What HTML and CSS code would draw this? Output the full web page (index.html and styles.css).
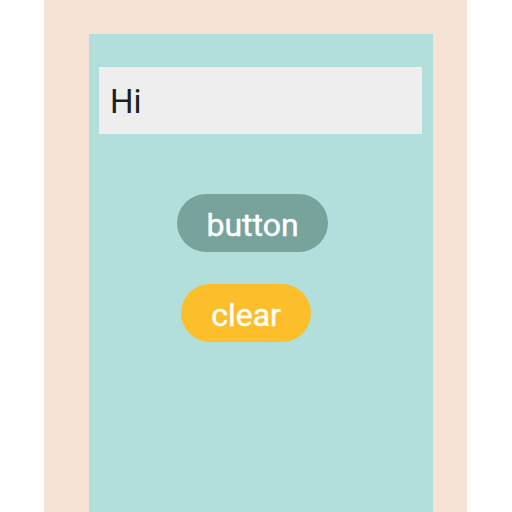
FILE: index.html
```html
<!DOCTYPE html>
<html lang="en">
<head>
    <meta charset="UTF-8" />
    <meta name="viewport" content="width=device-width, initial-scale=1.0" />
    <title>Hi</title>
    <link rel="stylesheet" href="styles.css">
</head>
<body>
    <div class="frame">
        <main class="panel">
            <div class="field">Hi</div>
            <button class="btn btn-main">button</button>
            <button class="btn btn-clear">clear</button>
        </main>
    </div>
</body>
</html>
```

FILE: styles.css
```css
/* Main Styles */
body {
    margin: 0;
    padding: 0;
    background-color: #ffffff;
    font-family: Roboto, 'Noto Sans', sans-serif;
}

.frame {
    margin-left: 44px;
    width: 423px;
    height: 512px;
    box-sizing: border-box;
    padding: 34px 34px 0 45px;
    background-color: #f7e3d6;
}

.panel {
    height: 100%;
    background-color: #b2dfdb;
    display: flex;
    flex-direction: column;
    align-items: flex-start;
    padding-top: 33px;
    box-sizing: border-box;
}

.field {
    margin: 0 11px 0 10px;
    align-self: stretch;
    height: 67px;
    box-sizing: border-box;
    padding-left: 11px;
    padding-top: 2px;
    background-color: #eeeeee;
    color: #1e1e1e;
    font-size: 33px;
    line-height: 65px;
}

/* Buttons */
.btn {
    height: 58px;
    border: none;
    border-radius: 29px;
    color: #ffffff;
    font-family: Roboto, sans-serif;
    font-weight: normal;
    font-size: 32px;
    padding: 3px 0 0;
    cursor: pointer;
    -webkit-text-stroke: 0.4px #ffffff;
}

.btn-main {
    margin: 60px 0 0 88px;
    width: 151px;
    background-color: #78a39c;
}

.btn-clear {
    margin: 32px 0 0 92px;
    width: 130px;
    background-color: #fdbe2b;
}
```
